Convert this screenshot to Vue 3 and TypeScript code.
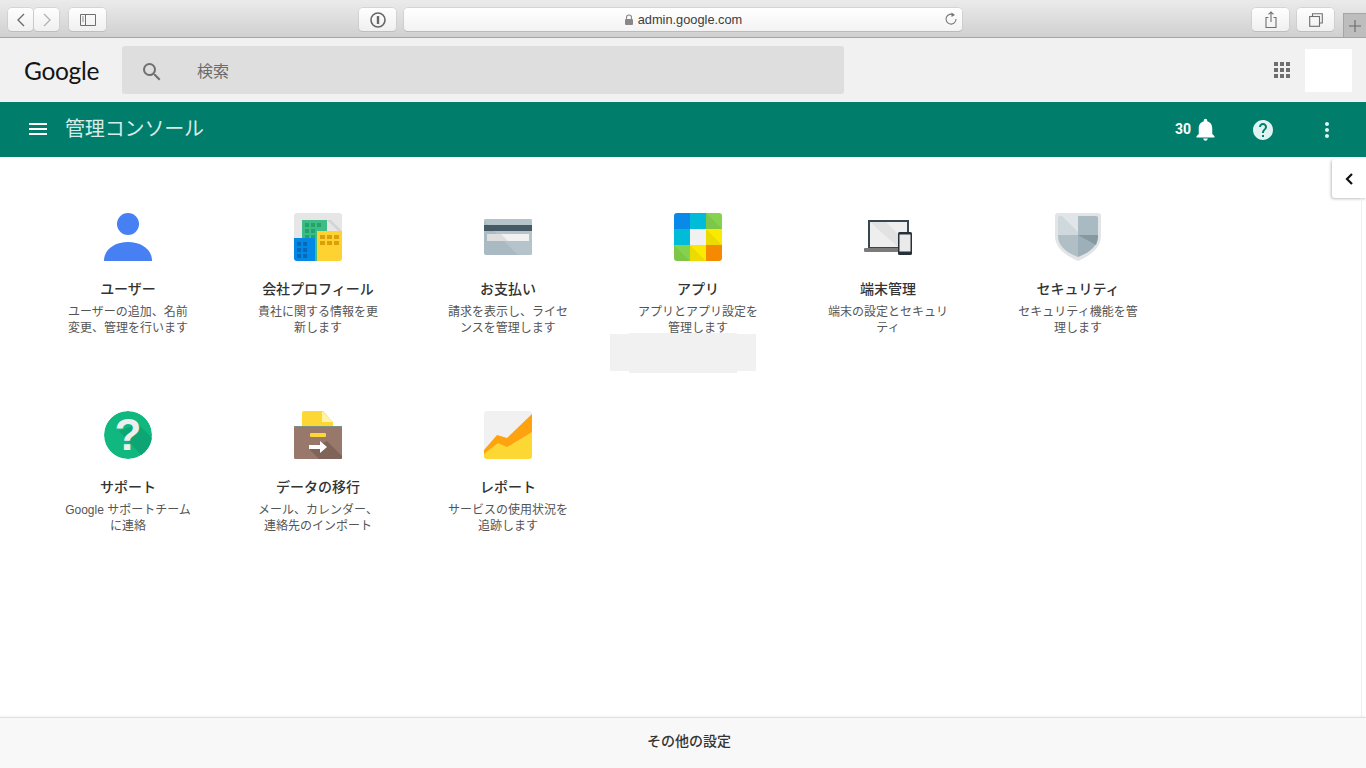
<script setup lang="ts">
interface Tile {
  icon: string
  title: string
  desc: string
}

const tiles: Tile[] = [
  { icon: 'user', title: 'ユーザー', desc: 'ユーザーの追加、名前変更、管理を行います' },
  { icon: 'company', title: '会社プロフィール', desc: '貴社に関する情報を更新します' },
  { icon: 'billing', title: 'お支払い', desc: '請求を表示し、ライセンスを管理します' },
  { icon: 'apps', title: 'アプリ', desc: 'アプリとアプリ設定を管理します' },
  { icon: 'devices', title: '端末管理', desc: '端末の設定とセキュリティ' },
  { icon: 'security', title: 'セキュリティ', desc: 'セキュリティ機能を管理します' },
  { icon: 'support', title: 'サポート', desc: 'Google サポートチームに連絡' },
  { icon: 'migration', title: 'データの移行', desc: 'メール、カレンダー、連絡先のインポート' },
  { icon: 'reports', title: 'レポート', desc: 'サービスの使用状況を追跡します' },
]

const appColors: string[] = [
  '#0a8ae8', '#00bcd9', '#85d34d',
  '#00bcd9', '#f1f1f1', '#fbe900',
  '#85d34d', '#fbe900', '#f58a00',
]

const waffle: number[] = [0, 1, 2]
</script>

<template>
  <div class="page">
    <div class="chrome">
      <div class="nav-pair">
        <button class="tb tb-nav">
          <svg width="10" height="14" viewBox="0 0 10 14"><path d="M8 1 2 7l6 6" fill="none" stroke="#6e6e6e" stroke-width="1.4" /></svg>
        </button>
        <button class="tb tb-nav">
          <svg width="10" height="14" viewBox="0 0 10 14"><path d="m2 1 6 6-6 6" fill="none" stroke="#b5b5b5" stroke-width="1.4" /></svg>
        </button>
      </div>
      <button class="tb tb-wide tb-side">
        <svg width="16" height="12" viewBox="0 0 16 12"><path d="M.5.5h15v11H.5zM5.5.5v11" fill="none" stroke="#707070" /><path d="M2 3h2M2 5h2M2 7h2" stroke="#909090" /></svg>
      </button>
      <div class="chrome-mid">
        <button class="tb tb-wide">
          <svg width="16" height="16" viewBox="0 0 16 16"><circle cx="8" cy="8" r="7" fill="none" stroke="#666" stroke-width="1.6" /><rect x="6.8" y="4" width="2.4" height="8" rx=".5" fill="#666" /></svg>
        </button>
        <div class="address">
          <svg width="10" height="12" viewBox="0 0 10 12"><path d="M2.5 5V3.5a2.5 2.5 0 0 1 5 0V5" fill="none" stroke="#888" stroke-width="1.1" /><rect x="1" y="5" width="8" height="6" rx="1" fill="#888" /></svg>
          <span>admin.google.com</span>
          <svg class="reload" width="14" height="14" viewBox="0 0 14 14"><path d="M9.8 3A5 5 0 1 0 12 7" fill="none" stroke="#777" stroke-width="1.1" /><path d="M7.5 .5 11 3 7.5 5z" fill="#777" /></svg>
        </div>
      </div>
      <button class="tb tb-wide">
        <svg width="14" height="18" viewBox="0 0 14 18"><path d="M4.5 6.5H2v10h10v-10H9.5M7 11V1M4.5 3.3 7 1l2.5 2.3" fill="none" stroke="#707070" stroke-width="1.1" /></svg>
      </button>
      <button class="tb tb-wide tb-tabs">
        <svg width="14" height="14" viewBox="0 0 14 14"><path d="M3.5 3V.7h9.800v9.300H10.500" fill="none" stroke="#707070" stroke-width="1.1" /><rect x=".7" y="3.5" width="9.8" height="9.8" fill="none" stroke="#707070" stroke-width="1.1" /></svg>
      </button>
      <div class="new-tab">
        <svg width="12" height="12" viewBox="0 0 12 12"><path d="M6 0v12M0 6h12" stroke="#6a6a6a" stroke-width="1.1" /></svg>
      </div>
    </div>

    <header class="top">
      <span class="logo">Google</span>
      <div class="search">
        <svg class="search-icon" width="24" height="24" viewBox="0 0 24 24"><path fill="#6f6f6f" d="M15.500 14h-.79l-.28-.27A6.470 6.470 0 0 0 16 9.500 6.500 6.500 0 1 0 9.500 16c1.610 0 3.090-.59 4.230-1.570l.27.28v.79l5 4.990L20.490 19l-4.990-5zm-6 0C7.010 14 5 11.990 5 9.500S7.010 5 9.500 5 14 7.010 14 9.500 11.990 14 9.500 14z" /></svg>
        <span>検索</span>
      </div>
      <div class="top-right">
        <div class="waffle">
          <template v-for="r in waffle" :key="r">
            <i v-for="c in waffle" :key="c"></i>
          </template>
        </div>
        <div class="avatar"></div>
      </div>
    </header>

    <div class="bar">
      <svg class="menu" width="24" height="24" viewBox="0 0 24 24"><path fill="#fff" d="M3 18h18v-2H3v2zm0-5h18v-2H3v2zm0-7v2h18V6H3z" /></svg>
      <span class="bar-title">管理コンソール</span>
      <span class="count">30</span>
      <svg class="bell" width="27" height="27" viewBox="0 0 24 24"><path fill="#fff" d="M12 22c1.100 0 2-.9 2-2h-4c0 1.100.9 2 2 2zm6-6v-5c0-3.070-1.630-5.640-4.500-6.320V4c0-.83-.67-1.500-1.500-1.500s-1.500.67-1.500 1.500v.68C7.640 5.360 6 7.920 6 11v5l-2 2v1h16v-1l-2-2z" /></svg>
      <svg class="help" width="24" height="24" viewBox="0 0 24 24"><path fill="#e0f2f1" d="M12 2C6.480 2 2 6.480 2 12s4.480 10 10 10 10-4.480 10-10S17.520 2 12 2zm1 17h-2v-2h2v2zm2.070-7.750l-.9.920C13.450 12.900 13 13.500 13 15h-2v-.5c0-1.100.45-2.100 1.170-2.830l1.240-1.260c.37-.36.59-.86.59-1.410 0-1.100-.9-2-2-2s-2 .9-2 2H8c0-2.210 1.790-4 4-4s4 1.790 4 4c0 .88-.36 1.680-.93 2.250z" /></svg>
      <svg class="more" width="24" height="24" viewBox="0 0 24 24"><path fill="#e0f2f1" d="M12 8c1.100 0 2-.9 2-2s-.9-2-2-2-2 .9-2 2 .9 2 2 2zm0 2c-1.100 0-2 .9-2 2s.9 2 2 2 2-.9 2-2-.9-2-2-2zm0 6c-1.100 0-2 .9-2 2s.9 2 2 2 2-.9 2-2-.9-2-2-2z" /></svg>
    </div>

    <main class="content">
      <div class="grid">
        <div v-for="t in tiles" :key="t.icon" class="tile">
          <div class="icon-box">
            <svg class="icon" width="48" height="50" viewBox="0 0 48 50">
              <defs>
                <clipPath :id="'rounded-' + t.icon"><rect y="1" width="48" height="48" rx="3" /></clipPath>
                <clipPath :id="'disc-' + t.icon"><circle cx="24" cy="25" r="24" /></clipPath>
              </defs>
              <g v-if="t.icon === 'user'">
                <circle cx="24" cy="12" r="11" fill="#4680f3" />
                <path d="M0 49C0 37 11 30 24 30s24 7 24 19z" fill="#4680f3" />
              </g>
              <g v-else-if="t.icon === 'company'" :clip-path="'url(#rounded-' + t.icon + ')'">
                <rect y="1" width="48" height="48" fill="#e6e6e6" />
                <path d="M33 8 48 23V19L37 8z" fill="#d4d4d4" />
                <rect x="8" y="8" width="25" height="41" fill="#3fbb87" />
                <path d="M11 11h4v4h-4zM17 11h4v4h-4zM23 11h4v4h-4zM11 17h4v4h-4zM17 17h4v4h-4zM11 23h4v4h-4zM17 23h4v4h-4z" fill="#1fa568" />
                <rect y="26" width="21" height="23" fill="#0288e6" />
                <path d="M3 30h4v4H3zM9 30h4v4H9zM3 36h4v4H3zM9 36h4v4H9zM3 42h4v4H3zM9 42h4v4H9z" fill="#0669b5" />
                <rect x="23" y="19" width="25" height="30" fill="#fdd231" />
                <path d="M26 23h5v4h-5zM33 23h5v4h-5zM40 23h5v4h-5zM26 29h5v4h-5zM33 29h5v4h-5zM40 29h5v4h-5z" fill="#d9a00c" />
              </g>
              <g v-else-if="t.icon === 'billing'">
                <rect y="7" width="48" height="36" rx="2" fill="#a9bac2" />
                <path d="M0 9l34 34h12a2 2 0 0 0 2-2V9a2 2 0 0 0-2-2H2a2 2 0 0 0-2 2z" fill="#b5c3ca" />
                <rect y="13" width="48" height="6" fill="#455a64" />
                <rect x="3" y="22" width="42" height="7" fill="#f1f1f1" />
                <path d="M3 22h14l7 7H3z" fill="#dedede" />
              </g>
              <g v-else-if="t.icon === 'apps'" :clip-path="'url(#rounded-' + t.icon + ')'">
                <rect v-for="(col, i) in appColors" :key="i" :x="(i % 3) * 16" :y="1 + Math.floor(i / 3) * 16" width="16" height="16" :fill="col" />
                <path d="M32 1 48 17H32zM0 33l16 16H0zM32 17l16 16H32zM16 33l16 16H16z" fill="#000" fill-opacity=".06" />
              </g>
              <g v-else-if="t.icon === 'devices'">
                <rect x="4" y="8" width="41" height="28" fill="#37474f" />
                <rect x="6" y="10" width="37" height="25" fill="#eee" />
                <path d="M6 10h16l21 21v4H34z" fill="#e2e2e2" />
                <rect y="36" width="38" height="4" rx="1" fill="#7b7b7b" />
                <rect x="34" y="20" width="14" height="23" rx="1.5" fill="#263238" />
                <rect x="35.5" y="22.5" width="11" height="17" fill="#eaeaea" />
              </g>
              <g v-else-if="t.icon === 'security'">
                <path d="M4 1h40q3 0 3 3v20c0 12-11 20-23 25C12 44 1 36 1 24V4q0-3 3-3z" fill="#e2e4e5" />
                <path d="M24 4H6Q4 4 4 6v17h20z" fill="#cfd8dc" />
                <path d="M8 4h16v16z" fill="#dfe5e8" />
                <path d="M24 4h18q2 0 2 2v17H24z" fill="#a9bac3" />
                <path d="M4 23h20v22C13 41 4 34 4 24z" fill="#b0bec5" />
                <path d="M24 23h20v1c0 10-9 17-20 21z" fill="#9db0b9" />
                <path d="M24 23h20v1c0 3-1 6-2 9z" fill="#85999f" />
              </g>
              <g v-else-if="t.icon === 'support'" :clip-path="'url(#disc-' + t.icon + ')'">
                <circle cx="24" cy="25" r="24" fill="#10b77f" />
                <path d="M15 21 42 50h6V28L34 14z" fill="#0da573" />
              </g>
              <g v-else-if="t.icon === 'migration'">
                <path d="M10 1h19l10 11v12H8V3q0-2 2-2z" fill="#fdd835" />
                <path d="M28 1l11 11H28z" fill="#fff3a8" />
                <rect y="16" width="48" height="33" rx="1.5" fill="#98786a" />
                <path d="M0 16h48v1H0z" fill="#7b8f83" />
                <path d="M15 39 25 49h21.500a1.500 1.500 0 0 0 1.500-1.500V46L33 31z" fill="#80645a" />
                <rect x="16" y="23" width="16" height="4" rx="1" fill="#fdd835" />
                <path d="M15 35h11v-4l7 6-7 6v-4H15z" fill="#fff" />
              </g>
              <g v-else-if="t.icon === 'reports'" :clip-path="'url(#rounded-' + t.icon + ')'">
                <rect y="1" width="48" height="48" fill="#f1f1f1" />
                <path d="M0 40 13 25l10 3L48 4v24L23 40 14 36 0 47z" fill="#ffa210" />
                <path d="M0 44 14 33l9 4L48 22v27H0z" fill="#fdd835" />
              </g>
            </svg>
            <span v-if="t.icon === 'support'" class="q">?</span>
          </div>
          <div class="tile-title">{{ t.title }}</div>
          <div class="tile-desc">{{ t.desc }}</div>
        </div>
      </div>

      <div class="redact redact-wide"></div>
      <div class="redact redact-tall"></div>

      <div class="side-tab">
        <svg width="10" height="14" viewBox="0 0 10 14"><path d="M8 2 3 7l5 5" fill="none" stroke="#111" stroke-width="2.2" /></svg>
      </div>
      <div class="side-line"></div>
    </main>

    <footer class="foot">その他の設定</footer>
  </div>
</template>

<style scoped>
.page {
  width: 1366px;
  height: 768px;
  display: flex;
  flex-direction: column;
  overflow: hidden;
  background: #fff;
  font-family: "Liberation Sans", "Noto Sans CJK JP", sans-serif;
}

.chrome {
  height: 38px;
  box-sizing: border-box;
  flex: none;
  display: flex;
  align-items: flex-start;
  padding: 8px 0 0 8px;
  background: linear-gradient(#ebebeb, #d0d0d0);
  border-bottom: 1px solid #a5a5a5;
}
.nav-pair {
  display: flex;
  gap: 1px;
}
.tb {
  height: 23px;
  padding: 0;
  display: flex;
  align-items: center;
  justify-content: center;
  background: linear-gradient(#fefefe, #f0f0f0);
  border: 0;
  border-radius: 4px;
  box-shadow: 0 0 0 .5px #c4c4c4, 0 1px 0 #b8b8b8;
}
.tb-nav {
  width: 25px;
}
.tb-wide {
  width: 37px;
}
.tb-side {
  margin-left: 10px;
}
.tb-tabs {
  margin-left: 8px;
}
.chrome-mid {
  display: flex;
  gap: 8px;
  margin-left: 253px;
  margin-right: 290px;
}
.address {
  position: relative;
  width: 558px;
  height: 23px;
  box-sizing: border-box;
  display: flex;
  align-items: center;
  justify-content: center;
  gap: 4px;
  font-size: 12.8px;
  color: #3c3c3c;
  background: linear-gradient(#fff, #f3f3f3);
  border-radius: 4px;
  box-shadow: 0 0 0 .5px #c4c4c4, 0 1px 0 #b0b0b0;
}
.reload {
  position: absolute;
  right: 4px;
  top: 4px;
}
.new-tab {
  width: 23px;
  height: 24px;
  margin: 5px 0 0 9px;
  display: flex;
  align-items: center;
  justify-content: center;
  background: #bdbdbd;
  border-left: 1px solid #a5a5a5;
  border-top: 1px solid #a5a5a5;
  box-sizing: border-box;
}

.top {
  height: 64px;
  flex: none;
  display: flex;
  align-items: center;
  background: #f1f1f1;
}
.logo {
  width: 98px;
  margin-left: 24px;
  font-family: Lato, sans-serif;
  font-size: 24.5px;
  letter-spacing: -.3px;
  color: #141414;
}
.search {
  width: 722px;
  height: 48px;
  display: flex;
  align-items: center;
  gap: 33px;
  padding-left: 18px;
  box-sizing: border-box;
  background: #dedede;
  border-radius: 3px;
  font-family: "Noto Sans CJK JP", sans-serif;
  font-size: 16px;
  color: #6b6b6b;
}
.search-icon {
  margin-top: 3px;
}
.top-right {
  margin-left: auto;
  display: flex;
  align-items: center;
  gap: 15px;
  margin-right: 14px;
}
.waffle {
  width: 16px;
  height: 16px;
  display: grid;
  grid-template-columns: repeat(3, 4px);
  grid-auto-rows: 4px;
  gap: 2px;
}
.waffle i {
  display: block;
  background: #6e6e6e;
}
.avatar {
  width: 47px;
  height: 43px;
  background: #fff;
}

.bar {
  height: 55px;
  flex: none;
  display: flex;
  align-items: center;
  background: #007d6b;
  padding-left: 26px;
}
.menu {
  margin-top: -1px;
}
.bar-title {
  margin-left: 15px;
  font-family: "Noto Sans CJK JP", sans-serif;
  font-size: 20px;
  letter-spacing: -.15px;
  color: #d6ece8;
  margin-top: -5px;
}
.count {
  margin-left: auto;
  font-family: Roboto, sans-serif;
  font-weight: 700;
  font-size: 14px;
  color: #fff;
  margin-top: -2px;
}
.bell {
  margin-left: 1px;
}
.help {
  margin-left: 32px;
}
.more {
  margin-left: 40px;
  margin-right: 27px;
}

.content {
  position: relative;
  flex: 1;
  padding: 55px 0 0 33px;
  box-sizing: border-box;
}
.grid {
  display: grid;
  grid-template-columns: repeat(6, 190px);
  grid-auto-rows: 198px;
}
.tile {
  display: flex;
  flex-direction: column;
  align-items: center;
}
.icon-box {
  position: relative;
  width: 48px;
  height: 50px;
  flex: none;
}
.icon {
  display: block;
}
.q {
  position: absolute;
  left: 0;
  right: 0;
  top: 0;
  height: 50px;
  text-align: center;
  font-family: "Liberation Sans", sans-serif;
  font-weight: 700;
  font-size: 44px;
  line-height: 50px;
  color: #eee;
}
.tile-title {
  margin-top: 16px;
  font-family: "Noto Sans CJK JP", sans-serif;
  font-size: 14px;
  font-weight: 500;
  line-height: 20px;
  color: #333;
}
.tile-desc {
  width: 126px;
  margin-top: 6px;
  font-size: 12px;
  line-height: 16px;
  color: #555;
  text-align: center;
}
.redact {
  position: absolute;
  background: #f1f1f1;
}
.redact-wide {
  left: 610px;
  top: 177px;
  width: 146px;
  height: 37px;
}
.redact-tall {
  left: 629px;
  top: 176px;
  width: 108px;
  height: 40px;
}
.side-tab {
  position: absolute;
  top: 2px;
  right: 0;
  width: 34px;
  height: 39px;
  display: flex;
  align-items: center;
  box-sizing: border-box;
  padding-left: 12px;
  background: #fff;
  border-radius: 3px 0 0 3px;
  box-shadow: -1px 1px 3px rgba(0, 0, 0, .25);
}
.side-line {
  position: absolute;
  top: 41px;
  bottom: 0;
  left: 1361px;
  width: 1px;
  background: #f0f0f0;
}

.foot {
  position: relative;
  height: 51px;
  flex: none;
  box-sizing: border-box;
  display: flex;
  align-items: center;
  justify-content: center;
  padding: 0 0 7px 12px;
  background: #f8f8f8;
  border-top: 1px solid #e0e0e0;
  box-shadow: 0 -1px 2px rgba(0, 0, 0, .05);
  font-family: "Noto Sans CJK JP", sans-serif;
  font-size: 14px;
  font-weight: 500;
  color: #333;
}
</style>
